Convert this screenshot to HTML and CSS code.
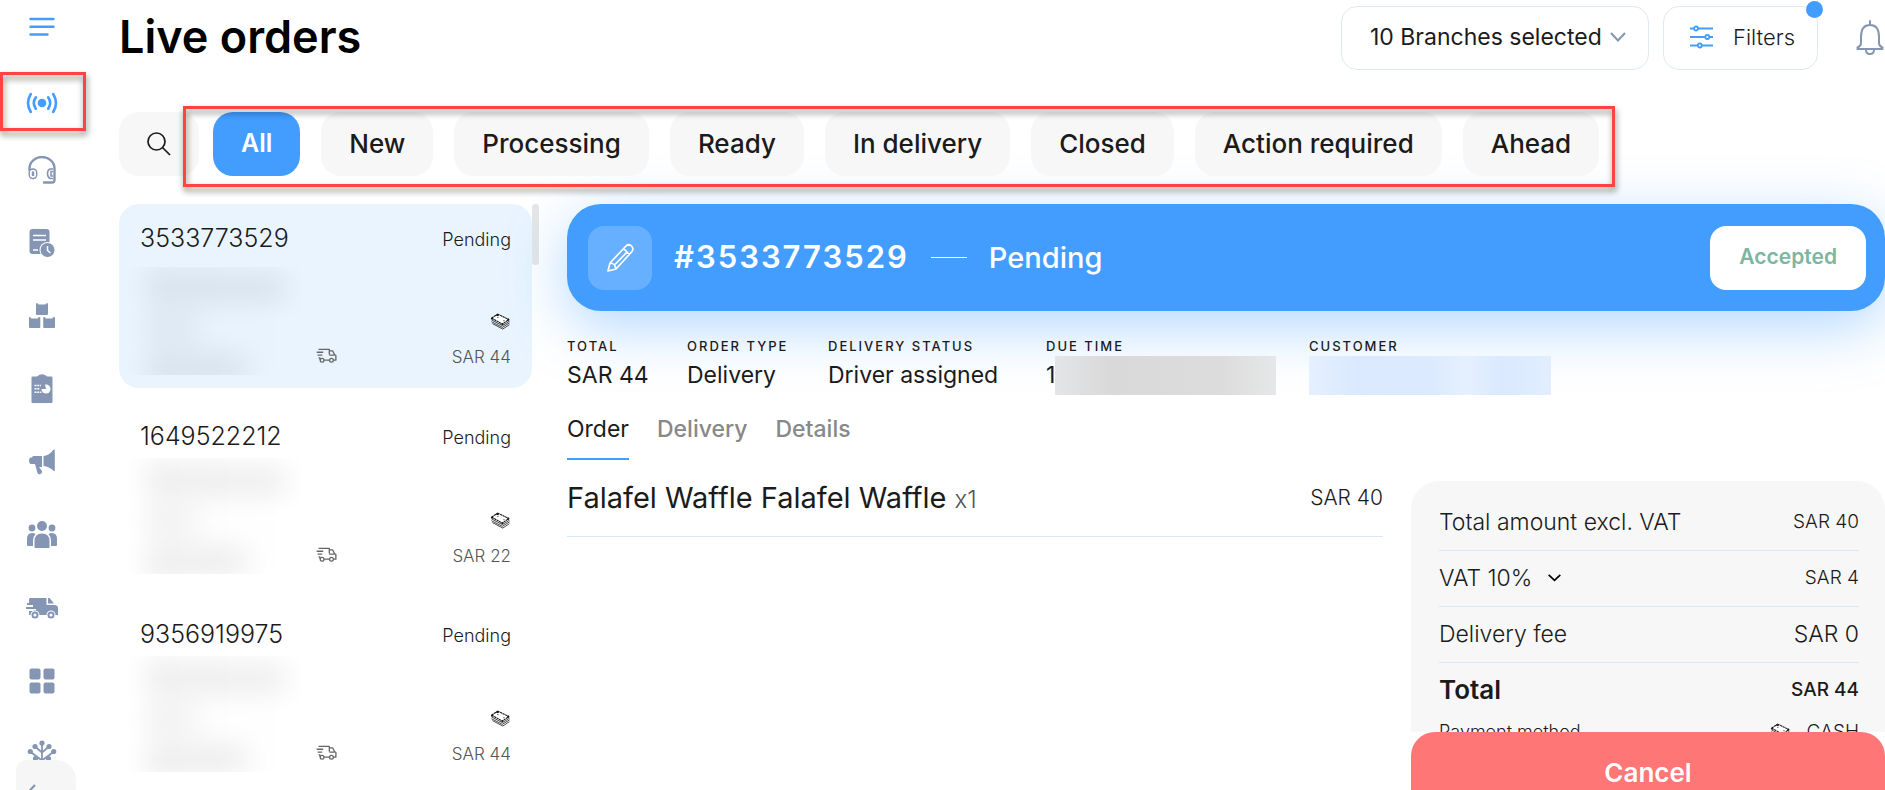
FILE: index.html
```
<!DOCTYPE html>
<html lang="en">
<head>
<meta charset="utf-8">
<title>Live orders</title>
<link rel="stylesheet" href="styles.css">
</head>
<body>
<svg class="defs" aria-hidden="true">
  <symbol id="cash" viewBox="0 0 22 18">
    <path d="M8 1.200 19.800 6.800 13 11.800 1.600 5.400Z" fill="#fff" stroke="currentColor" stroke-width="1.100" stroke-dasharray="2.400 .5"/>
    <path d="M1.400 7.200 13 13.400 20.600 8.600M1.400 9.200 13 15.200 20.600 10.400M2.400 11.200 13.400 17 20.400 12.400" fill="none" stroke="currentColor" stroke-width=".8"/>
    <path d="M6.500 2.500h2.600M1 5.600l2 .8M19 6.200v2.400M12 11.300l2 .6" stroke="currentColor" stroke-width="1.600"/>
    <path d="M7.500 4.600h1.400M14 8.200h1.400" stroke="currentColor" stroke-width=".8"/>
  </symbol>
  <symbol id="van" viewBox="0 0 22 16">
    <g fill="none" stroke="currentColor" stroke-width="1.400" stroke-linejoin="round">
      <path d="M2.500 1.500H14v5.500M0.500 4.500h7M1.500 7.500h5M2.500 10.500H4v2M8.500 13h6M14 3h3.500l2 4 1.500 1v5h-2.500M14 7.500h5.500"/>
      <circle cx="6.300" cy="13" r="2"/><circle cx="16.300" cy="13" r="2"/>
    </g>
  </symbol>
</svg>
<div class="app">
  <nav class="sidebar" aria-label="Main">
    <button class="nav menu" aria-label="Menu"><svg width="26" height="20" viewBox="0 0 26 20" fill="none" stroke="#429dff" stroke-width="2.400" stroke-linecap="round"><path d="M1.500 2h23M1.500 9.800h23M1.500 17.500h17"/></svg></button>
    <a href="#" class="nav live" aria-label="Live orders"><svg width="32" height="22" viewBox="0 0 32 22" fill="none" stroke="#429dff" stroke-width="2.600" stroke-linecap="round"><circle cx="16" cy="11" r="4.300" fill="#429dff" stroke="none"/><path d="M9.800 5.300q-4 5.700 0 11.400M22.200 5.300q4 5.700 0 11.400M4.800 2q-5.600 9 0 18M27.200 2q5.600 9 0 18"/></svg><span class="marker"></span></a>
    <a href="#" class="nav" aria-label="Support"><svg width="28" height="28" viewBox="0 0 28 28" fill="none" stroke="currentColor"><path d="M1.500 14v-1.500a12.500 11.500 0 0 1 25 0V24q0 2.500-2.500 2.500h-8" stroke-width="2.400" stroke-linecap="round"/><rect x="1.200" y="13" width="7.500" height="9.500" rx="3.500" stroke-width="1.400"/><path d="M5 15.500v4.500" stroke-width="2.400"/><path d="M25 13h-3q-2.500 1-2.500 4.500t2.500 5h3M25 15.500h-2v4.500h2" stroke-width="1.600"/></svg></a>
    <a href="#" class="nav" aria-label="Order history"><svg width="26" height="28" viewBox="0 0 26 28"><rect x="0.500" width="20" height="25" rx="3" fill="currentColor"/><path d="M4 6.500h13M4 11h13M4 21h5" stroke="#fff" stroke-width="1.500"/><circle cx="18.500" cy="21" r="8" fill="#fff"/><circle cx="18.500" cy="21" r="7" fill="currentColor"/><path d="M18.500 17v4.500l3 2.500" stroke="#fff" stroke-width="1.500" fill="none"/></svg></a>
    <a href="#" class="nav" aria-label="Products"><svg width="26" height="26" viewBox="0 0 26 26" fill="currentColor"><path d="M7 1.500Q7 0 8 0t1.500 1.500h7Q17 0 18 0t1 1.500V11q0 1-1 1H8q-1 0-1-1ZM0 14.500q.5-1 2 0v1h7v-1q1.500-1 2.300 0V24q0 1-1 1H1q-1 0-1-1ZM14.200 14.500q1-1 2.300 0v1h7v-1q1.500-1 2.500 0V24q0 1-1 1h-9.800q-1 0-1-1Z"/></svg></a>
    <a href="#" class="nav" aria-label="Reports"><svg width="22" height="30" viewBox="0 0 22 30"><path d="M1.500 2.500H6Q11-2 16 2.500h4.500q1 0 1 1V28q0 1-1 1h-19q-1 0-1-1V3.500q0-1 1-1Z" fill="currentColor"/><path d="M3.500 11.500h7M3.500 14.800h5M3.500 18.200h7" stroke="#fff" stroke-width="1.500" stroke-dasharray="2 .8"/><circle cx="15" cy="15" r="4.500" fill="#fff"/><path d="M15 15h-5v-4.500h4Z" fill="currentColor"/></svg></a>
    <a href="#" class="nav" aria-label="Marketing"><svg width="26" height="26" viewBox="0 0 26 26" fill="currentColor"><path d="M4 7h9v11h-3l3 4q.5 2-1.500 3T8.500 24L6 15H1.500Q0 14 0 11.500T1.500 8.500H3ZM14.500 7Q20 6.500 24.500.8q1.300-.6 1.300.7v20q0 1-1 .5Q20 17.500 14.500 17Z"/></svg></a>
    <a href="#" class="nav" aria-label="Customers"><svg width="30" height="27" viewBox="0 0 30 27" fill="currentColor"><circle cx="15" cy="5" r="5"/><circle cx="5" cy="7" r="3.400"/><circle cx="25" cy="7" r="3.400"/><path d="M7.500 26V20q0-7.500 7.500-7.500t7.500 7.500v6q0 1-1 1h-13q-1 0-1-1ZM6 25H1q-1 0-1-1v-6q0-6 5-6 2.500 0 3.500 1Q6 15.500 6 20ZM24 25h5q1 0 1-1v-6q0-6-5-6-2.500 0-3.500 1Q24 15.500 24 20Z"/></svg></a>
    <a href="#" class="nav" aria-label="Delivery"><svg width="32" height="22" viewBox="0 0 32 22" fill="currentColor"><path d="M4 1h16.500v7H29q3 .5 3 3v7h-2.500a4.500 4.500 0 0 0-9 0h-7a4.500 4.500 0 0 0-9 0H3v-4h7v-2H0v-2h7V8H1V6h2V2.500Q3 1 4 1ZM22 1h1.500l4.500 5.500h-6Z"/><path fill-rule="evenodd" d="M9 14.500a3.500 3.500 0 1 0 0 7a3.500 3.500 0 1 0 0-7m0 2a1.500 1.500 0 1 1 0 3a1.500 1.500 0 1 1 0-3M25 14.500a3.500 3.500 0 1 0 0 7a3.500 3.500 0 1 0 0-7m0 2a1.500 1.500 0 1 1 0 3a1.500 1.500 0 1 1 0-3"/></svg></a>
    <a href="#" class="nav" aria-label="Apps"><svg width="26" height="26" viewBox="0 0 26 26" fill="currentColor"><rect x=".5" y=".5" width="11" height="11" rx="2"/><rect x="14.500" y=".5" width="11" height="11" rx="2"/><rect x=".5" y="14.500" width="11" height="11" rx="2"/><rect x="14.500" y="14.500" width="11" height="11" rx="2"/></svg></a>
    <a href="#" class="nav" aria-label="Integrations"><svg width="30" height="28" viewBox="0 0 30 28" fill="currentColor"><path d="M15 3v24M8 6.500l7 6 7-6M3 11.500l12 9 12-9M3 25l6-5 6 5 6-5 6 5" fill="none" stroke="currentColor" stroke-width="1.800"/><circle cx="15" cy="3" r="2.600"/><circle cx="8" cy="6.500" r="2.600"/><circle cx="22" cy="6.500" r="2.600"/><circle cx="3.300" cy="11.500" r="2.600"/><circle cx="26.700" cy="11.500" r="2.600"/><circle cx="8.500" cy="18.500" r="2.600"/><circle cx="21.500" cy="18.500" r="2.600"/></svg></a>
    <button class="collapse" aria-label="Collapse menu"><svg width="16" height="20" viewBox="0 0 16 20" fill="none" stroke="#8496b3" stroke-width="2.200"><path d="M9 1 1 9.500 9 18"/></svg></button>
  </nav>
  <main class="main">
    <header class="top">
      <h1>Live orders</h1>
      <label class="branches">
        <select aria-label="Branches"><option>10 Branches selected</option></select>
        <svg width="16" height="10" viewBox="0 0 16 10" fill="none" stroke="#8496b3" stroke-width="2"><path d="m1 1 7 7.500L15 1"/></svg>
      </label>
      <button class="filters"><svg width="23" height="24" viewBox="0 0 23 24" fill="none" stroke="#429dff" stroke-width="1.800"><path d="M0 3.500h4M8 3.500h15M0 12h15M19.500 12H23M0 20.500h7.500M12 20.500h11"/><circle cx="6" cy="3.500" r="2"/><circle cx="17.300" cy="12" r="2"/><circle cx="9.800" cy="20.500" r="2"/></svg>Filters<span class="dot"></span></button>
      <button class="bell" aria-label="Notifications"><svg width="28" height="36" viewBox="0 0 28 36" fill="none" stroke="#8496b3" stroke-width="2" stroke-linecap="round" stroke-linejoin="round"><path d="M14 1v4M5 17q0-12 9-12t9 12v6q0 3 3.500 4.500V29h-25v-1.500Q5 26 5 23Z"/><path d="M10 30q0 4 4 4t4-4"/></svg></button>
    </header>
    <div class="statuses">
      <button class="chip search" aria-label="Search"><svg width="24" height="24" viewBox="0 0 24 24" fill="none" stroke="#1b1b1b" stroke-width="1.700"><circle cx="9.500" cy="9.500" r="8.500"/><path d="m15.500 15.500 7.500 7.500"/></svg></button>
      <button class="chip active">All</button>
      <button class="chip">New</button>
      <button class="chip">Processing</button>
      <button class="chip">Ready</button>
      <button class="chip">In delivery</button>
      <button class="chip">Closed</button>
      <button class="chip">Action required</button>
      <button class="chip">Ahead</button>
      <span class="marker marker-statuses"></span>
    </div>
    <div class="content">
      <section class="orders" aria-label="Orders">
        <article class="order selected">
          <h2>3533773529</h2><span class="state">Pending</span>
          <div class="masked"><i></i><i></i><i></i></div>
          <svg class="van" width="21" height="15"><use href="#van"/></svg>
          <div class="pay"><svg width="21" height="17"><use href="#cash"/></svg><span>SAR 44</span></div>
        </article>
        <article class="order">
          <h2>1649522212</h2><span class="state">Pending</span>
          <div class="masked"><i></i><i></i><i></i></div>
          <svg class="van" width="21" height="15"><use href="#van"/></svg>
          <div class="pay"><svg width="21" height="17"><use href="#cash"/></svg><span>SAR 22</span></div>
        </article>
        <article class="order">
          <h2>9356919975</h2><span class="state">Pending</span>
          <div class="masked"><i></i><i></i><i></i></div>
          <svg class="van" width="21" height="15"><use href="#van"/></svg>
          <div class="pay"><svg width="21" height="17"><use href="#cash"/></svg><span>SAR 44</span></div>
        </article>
      </section>
      <div class="scroll"></div>
      <section class="detail" aria-label="Order detail">
        <div class="banner">
          <button class="edit" aria-label="Edit order"><svg width="28" height="30" viewBox="0 0 28 30" fill="none" stroke="#fff" stroke-width="1.700" stroke-linejoin="round"><path d="M2 28 4 20 20 3q3-2.500 5.500 0t.5 5.500L10 26ZM17.500 5.500l6 6M4 20q5 0 6 6M21 9 8.500 22"/></svg></button>
          <h2>#3533773529</h2>
          <span class="dash"></span>
          <span class="banner-state">Pending</span>
          <button class="accepted">Accepted</button>
        </div>
        <dl class="facts">
          <div><dt>Total</dt><dd>SAR 44</dd></div>
          <div><dt>Order type</dt><dd>Delivery</dd></div>
          <div><dt>Delivery status</dt><dd>Driver assigned</dd></div>
          <div><dt>Due time</dt><dd>1<span class="hidden-time"></span></dd></div>
          <div><dt>Customer</dt><dd><span class="hidden-name"></span></dd></div>
        </dl>
        <div class="tabs" role="tablist">
          <button role="tab" class="current" aria-selected="true">Order</button>
          <button role="tab">Delivery</button>
          <button role="tab">Details</button>
        </div>
        <div class="body">
          <div class="items">
            <div class="item"><span>Falafel Waffle Falafel Waffle <small>x1</small></span><span class="price">SAR 40</span></div>
          </div>
          <aside class="side">
            <div class="summary">
              <div class="row"><span>Total amount excl. VAT</span><span class="amount">SAR 40</span></div>
              <div class="row"><span>VAT 10%<svg width="13" height="8" viewBox="0 0 13 8" fill="none" stroke="#000" stroke-width="1.700"><path d="m.7.8 5.800 5.500L12.300.8"/></svg></span><span class="amount">SAR 4</span></div>
              <div class="row"><span>Delivery fee</span><span>SAR 0</span></div>
              <div class="row total"><span>Total</span><span class="amount">SAR 44</span></div>
              <div class="row method"><span>Payment method</span><span class="cash"><svg width="21" height="17"><use href="#cash"/></svg>CASH</span></div>
            </div>
            <button class="cancel">Cancel</button>
          </aside>
        </div>
      </section>
    </div>
  </main>
</div>
</body>
</html>
```
FILE: styles.css
```
* { box-sizing: border-box; }
body {
  margin: 0;
  background: #fff;
  color: #1b1b1b;
  font-family: Inter, "Open Sans", sans-serif;
  overflow: hidden;
}
button, select { font: inherit; color: inherit; border: 0; background: none; padding: 0; margin: 0; }
h1, h2, dl, dd { margin: 0; }
svg { display: block; flex: none; }
.defs { position: absolute; width: 0; height: 0; }
.app { display: grid; grid-template-columns: 84px minmax(0, 1fr); height: 100vh; }
.marker { position: absolute; border: 3px solid #ff4242; filter: drop-shadow(1px 4px 3px rgba(0, 0, 0, .5)); pointer-events: none; z-index: 2; }

/* Sidebar */
.sidebar { position: relative; display: flex; flex-direction: column; color: #8496b3; padding-top: 2px; }
.nav { display: flex; align-items: center; justify-content: center; flex: none; height: 73px; color: inherit; }
.menu { height: 50px; margin-bottom: 20px; }
.live { position: relative; height: 61px; }
.live .marker { inset: 0 -2px 2px 0; }
.collapse {
  position: absolute; left: 16px; bottom: -30px; width: 60px; height: 60px;
  display: flex; align-items: flex-start; padding: 24px 0 0 10px;
  background: #f6f6f6; border-radius: 10px 20px 20px 10px;
}

/* Header */
.main { display: flex; flex-direction: column; min-width: 0; height: 100vh; padding-left: 35px; }
.top { display: flex; align-items: center; padding: 6px 1px 0 0; height: 70px; }
h1 { flex: 1; font-size: 45px; line-height: 64px; padding-bottom: 2px; font-weight: 600; color: #000; }
.branches, .filters { display: flex; align-items: center; height: 64px; padding-bottom: 2px; border: 1px solid #dfe9f4; border-radius: 16px; font-size: 22px; background: #fff; }
.branches { padding-left: 28px; padding-right: 22px; gap: 8px; margin-right: 14px; font-size: 23px; }
.branches select { appearance: none; outline: 0; }
.filters { position: relative; padding-left: 26px; padding-right: 22px; gap: 20px; margin-right: 38px; font-weight: 300; }
.dot { position: absolute; top: -6px; right: -6px; width: 17px; height: 17px; border-radius: 50%; background: #429dff; }

/* Status chips */
.statuses { position: relative; align-self: flex-start; display: flex; gap: 21px; margin-top: 42px; }
.chip { height: 64px; padding: 0 28px 2px; border-radius: 20px; background: #f7f7f7; font-size: 26px; font-weight: 500; white-space: nowrap; }
.search { width: 80px; padding-bottom: 0; margin-right: -7px; }
.chip.active { background: #429dff; color: #fff; font-size: 25px; font-weight: 600; }
.marker-statuses { left: 64px; right: -16px; top: -6px; bottom: -11px; }

/* Order list */
.content { display: flex; flex: 1; min-height: 0; margin-top: 28px; }
.orders { flex: none; width: 413px; display: flex; flex-direction: column; gap: 14px; }
.order {
  display: grid; grid-template-columns: 178px 1fr auto; grid-template-rows: 35px 1fr;
  row-gap: 10px; flex: none; height: 184px; padding: 17px 21px 13px; border-radius: 20px;
}
.selected { background: #e9f4ff; }
.order h2 { grid-column: 1 / 3; font-size: 25px; line-height: 35px; font-weight: 300; }
.state { font-size: 18px; line-height: 37px; font-weight: 300; }
.masked {
  width: 180px; height: 108px; margin-left: -19px; margin-top: 1px; overflow: hidden;
  display: flex; flex-direction: column; gap: 14px; padding: 8px 14px 0 26px;
  background: linear-gradient(90deg, transparent, rgba(0, 0, 0, .012) 20%, transparent);
}
.order:not(.selected) .masked { height: 116px; margin-top: -6px; padding-top: 10px; }
.masked i { flex: none; height: 26px; background: #000; opacity: .07; filter: blur(14px); }
.masked i:nth-child(2) { width: 50px; opacity: .05; }
.masked i:nth-child(3) { width: 100px; }
.van { align-self: end; margin: 0 0 12px -2px; color: #666; }
.pay { display: flex; flex-direction: column; align-items: flex-end; gap: 14px; align-self: end; padding-bottom: 5px; font-size: 17px; line-height: 26px; font-weight: 300; color: #555; }
.pay svg { color: #111; }
.scroll { width: 7px; height: 61px; border-radius: 4px; background: #e6e6e6; margin-right: 28px; flex: none; }

/* Order detail */
.detail { flex: 1; min-width: 0; display: flex; flex-direction: column; }
.banner { display: flex; align-items: center; flex: none; height: 107px; padding: 0 19px 0 21px; border-radius: 34px; background: #429dff; color: #fff; box-shadow: 0 16px 60px rgba(66, 157, 255, .4); }
.edit { display: flex; align-items: center; justify-content: center; width: 64px; height: 64px; border-radius: 16px; background: rgba(255, 255, 255, .2); margin-right: 22px; }
.banner h2 { padding-bottom: 2px; font-size: 31px; font-weight: 600; letter-spacing: 2px; }
.dash { width: 36px; height: 1px; background: #fff; margin: 0 22px; }
.banner-state { flex: 1; font-size: 29px; font-weight: 500; }
.accepted { height: 64px; padding: 0 29px 2px; border-radius: 16px; background: #fff; color: #7db6a0; font-size: 21px; font-weight: 600; }
.facts { display: grid; grid-template-columns: 120px 141px 218px 263px 1fr; margin-top: 25px; position: relative; }
dt { font-size: 13px; line-height: 20px; font-weight: 500; letter-spacing: 2px; text-transform: uppercase; }
dd { display: flex; font-size: 23px; line-height: 39px; height: 39px; }
.hidden-time { width: 221px; background: linear-gradient(90deg, #e4e5e7, #d9d9d9 25%, #dcdcdc 75%, #e6e7e8); }
.hidden-name { width: 242px; background: linear-gradient(90deg, #e5f0ff, #dae9ff 20%, #dbeaff 50%, #e5f0ff 65%, #dae9ff 80%, #e1eeff); }
.tabs { display: flex; gap: 28px; margin-top: 15px; }
.tabs button { height: 50px; padding: 0 0 11px; border-bottom: 2px solid transparent; font-size: 23px; font-weight: 500; color: #888; }
.tabs .current { color: #1b1b1b; border-color: #429dff; font-weight: 400; }
.body { display: flex; flex: 1; min-height: 0; gap: 28px; }
.items { flex: 1; }
.item { display: flex; justify-content: space-between; align-items: center; height: 77px; padding-bottom: 2px; border-bottom: 1px solid #d9e8f7; font-size: 29px; }
.item small { font-size: 24px; font-weight: 300; color: #555; }
.price { font-size: 21px; font-weight: 300; }
.side { display: flex; flex-direction: column; width: 474px; margin-top: 21px; }
.summary { flex: 1; min-height: 0; overflow: hidden; padding: 14px 26px 0 28px; border-radius: 28px 28px 0 0; background: #f7f7f7; }
.row { display: flex; justify-content: space-between; align-items: center; height: 56px; padding-bottom: 2px; border-bottom: 1px solid #d9e8f7; font-size: 23px; font-weight: 300; }
.row span { display: flex; align-items: center; }
.row span svg { margin-left: 16px; }
.row .amount { font-size: 19px; }
.row.total { height: 54px; border: 0; font-size: 26px; font-weight: 600; }
.total .amount { font-weight: 500; }
.row.method { height: 30px; border: 0; font-size: 18px; }
.row .cash { gap: 16px; font-size: 19px; }
.cancel { flex: none; height: 82px; margin-bottom: -24px; padding-bottom: 2px; border-radius: 24px 24px 0 0; background: #ff7676; color: #fff; font-size: 26px; font-weight: 600; }
```
